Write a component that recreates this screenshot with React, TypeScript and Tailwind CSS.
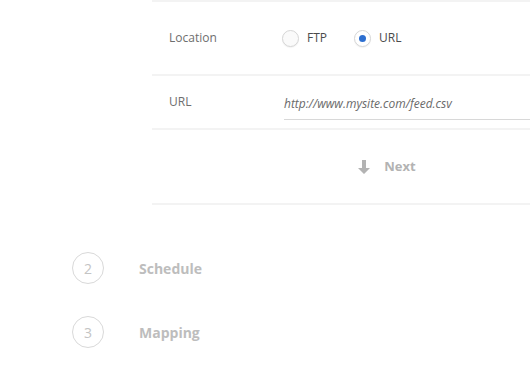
import React from 'react';

const STEPS = [
  { n: 2, label: 'Schedule' },
  { n: 3, label: 'Mapping' },
];

export default function App() {
  return (
    <div className="w-[530px] h-[367px] overflow-hidden bg-white font-['Open_Sans',sans-serif]">
      {/* Source panel (runs past the right edge) */}
      <div className="ml-[152px] w-[468px]">
        <div className="h-[2px] bg-[#f3f3f3]" />

        {/* Location row */}
        <div className="h-[74px] flex items-center px-[17px] border-b-2 border-[#f3f3f3]">
          <span className="w-[113px] text-[12px] text-[#6e6e6e]">Location</span>
          <label className="flex items-center gap-[8px] mr-[27px]">
            <span className="w-[17px] h-[17px] rounded-full border border-[#d6d6d6] bg-[#fafafa] shadow-[0_1px_1px_rgba(0,0,0,0.05)]" />
            <span className="text-[12px] text-[#4b4b4b]">FTP</span>
          </label>
          <label className="flex items-center gap-[8px]">
            <span className="w-[17px] h-[17px] rounded-full border border-[#d6d6d6] bg-white flex items-center justify-center shadow-[0_1px_1px_rgba(0,0,0,0.05)]">
              <span className="w-[7px] h-[7px] rounded-full bg-[#2d6fd0]" />
            </span>
            <span className="text-[12px] text-[#4b4b4b]">URL</span>
          </label>
        </div>

        {/* URL row */}
        <div className="h-[54px] flex items-center pl-[17px] border-b-2 border-[#f3f3f3]">
          <span className="w-[115px] text-[12px] text-[#6e6e6e]">URL</span>
          <div className="flex-1 h-[32px] flex items-center border-b border-[#d8d8d8] mt-[4px]">
            <span className="text-[12px] italic text-[#6a6a6a]">http://www.mysite.com/feed.csv</span>
          </div>
        </div>

        {/* Next */}
        <div className="h-[75px] flex items-center justify-center border-b-2 border-[#f3f3f3]">
          <button className="flex items-center gap-[14px] text-[#b3b3b3] font-bold text-[13px] pl-[2px]">
            <svg width="12" height="14" viewBox="0 0 12 14" className="fill-[#b3b3b3]">
              <path d="M4 0h4v8h4l-6 6-6-6h4z" />
            </svg>
            Next
          </button>
        </div>
      </div>

      {/* Steps */}
      <div className="ml-[72px] mt-[47px] flex flex-col gap-[32px]">
        {STEPS.map((s) => (
          <div key={s.n} className="flex items-center">
            <div className="w-[32px] h-[32px] rounded-full border border-[#d9d9d9] flex items-center justify-center text-[14px] text-[#c4c4c4]">
              {s.n}
            </div>
            <span className="ml-[35px] text-[14px] font-bold text-[#bdbdbd]">{s.label}</span>
          </div>
        ))}
      </div>
    </div>
  );
}
